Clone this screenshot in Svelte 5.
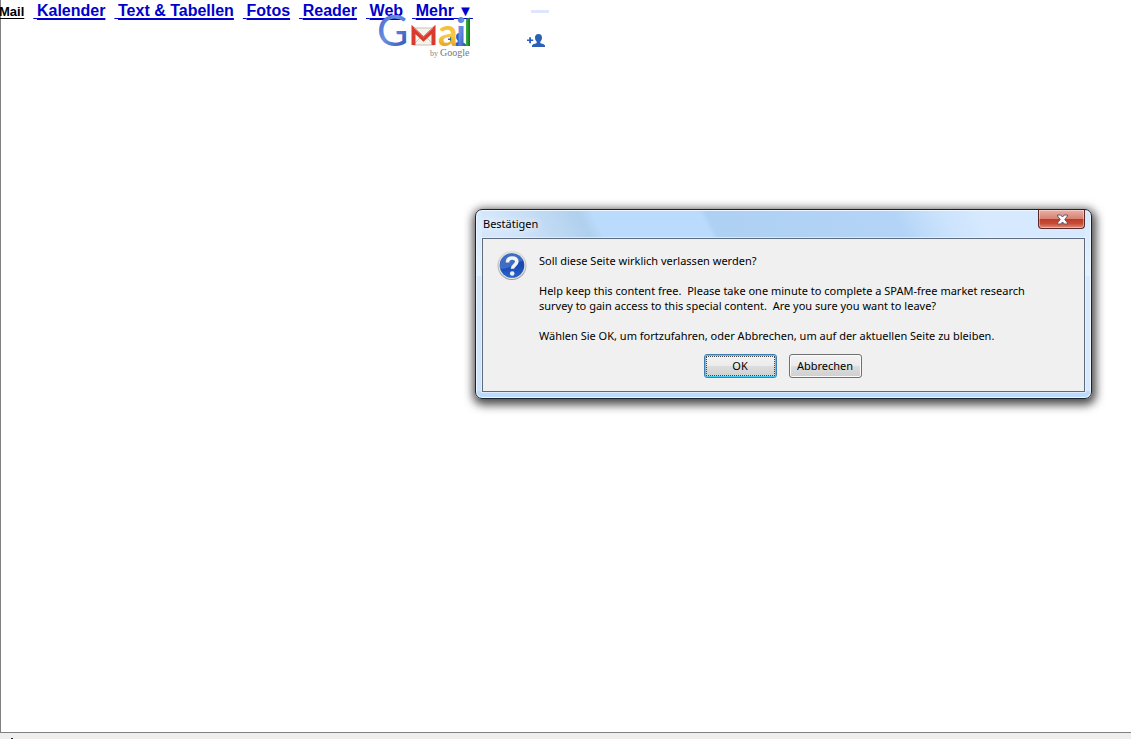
<script>
  const links = ['Kalender', 'Text & Tabellen', 'Fotos', 'Reader', 'Web'];
  let open = $state(true);
  const close = () => (open = false);
</script>

{#snippet person()}
  <path d="M0 5.4h2.200v-2.200h1.800v2.200h2.200v1.600H4v2.200H2.200V7H0z" />
  <path d="M11.500 0c2.400 0 3.500 1.500 3.500 3.600 0 1.800-.6 3.200-1.700 4.100v1.400c.8.8 4.700 1 4.700 2.700V13H5v-1.200c0-1.700 3.900-1.900 4.700-2.700V7.700C8.600 6.800 8 5.400 8 3.600 8 1.500 9.100 0 11.500 0z" />
{/snippet}

<main class="page">
  <nav>
    <a class="current" href="#mail">Mail</a>
    {#each links as label}
      <a href="#{label}"><span class="lead">&nbsp;</span>{label}</a>
    {/each}
    <a href="#mehr"><span class="lead">&nbsp;</span>Mehr<small>&nbsp;▼</small></a>
  </nav>

  <svg class="logo" width="98" height="63" viewBox="0 -13 98 63" role="img" aria-label="Gmail by Google">
    <defs>
      <linearGradient id="blue" x1="0" y1="0" x2="1" y2="1">
        <stop offset="0" stop-color="#2d56bd" /><stop offset=".45" stop-color="#6a90e4" /><stop offset="1" stop-color="#2449a9" />
      </linearGradient>
      <linearGradient id="gold" x1="0" y1="0" x2="0" y2="1">
        <stop offset="0" stop-color="#f1a91c" /><stop offset=".6" stop-color="#f8c846" /><stop offset="1" stop-color="#dc8c0c" />
      </linearGradient>
      <linearGradient id="green" x1="0" y1="0" x2="1" y2="0">
        <stop offset="0" stop-color="#41ad3d" /><stop offset="1" stop-color="#087c1c" />
      </linearGradient>
    </defs>
    <text class="big" x="1" y="33" fill="url(#blue)">G</text>
    <path d="M37 15h21v17H37z" fill="#f6f3ec" stroke="#c9c1b4" />
    <path d="m38 31 8-8m11 8-8-8" stroke="#c9c5bc" fill="none" />
    <path d="M37.500 32V16.500L47.500 26 57.500 16.500V32" fill="none" stroke="#d83b2d" stroke-width="4" />
    <path d="m38 15 9.500 9 9.500-9" fill="none" stroke="#ee7667" />
    <g fill="#2b5fb8" transform="translate(72 20)">{@render person()}</g>
    <text class="letter" x="62" y="33" fill="url(#gold)">a</text>
    <text class="letter" x="80" y="33" fill="url(#blue)">i</text>
    <path d="M90 6l4-1.500V33h-4z" fill="url(#green)" />
    <text class="by" x="54" y="43">by</text>
    <text class="google" x="64" y="43">Google</text>
  </svg>

  <div class="tools">
    <span class="dash"></span>
    <button class="add" aria-label="Person hinzufügen">
      <svg width="18" height="13" viewBox="0 0 18 13" fill="#2b5fb8">{@render person()}</svg>
    </button>
  </div>
</main>
<footer><span class="mark"></span></footer>

{#if open}
  <div class="dialog" role="dialog" aria-labelledby="title">
    <header>
      <h1 id="title">Bestätigen</h1>
      <button class="close" aria-label="Schließen" onclick={close}>
        <svg width="13" height="11" viewBox="0 0 13 11">
          <path d="M1.500 1h3.100l1.900 2 1.900-2h3.100v1L8.800 5.500 11.500 9v1H8.400L6.500 8 4.600 10H1.500V9l2.700-3.500L1.500 2z" fill="#fff" stroke="#565a72" />
        </svg>
      </button>
    </header>
    <section>
      <svg class="question" width="30" height="30" viewBox="0 0 30 30" aria-hidden="true">
        <defs>
          <linearGradient id="ring" x1="0" y1="0" x2="0" y2="1">
            <stop offset="0" stop-color="#dedede" /><stop offset="1" stop-color="#9b9b9b" />
          </linearGradient>
          <linearGradient id="disc" x1="0" y1="0" x2="0" y2="1">
            <stop offset="0" stop-color="#194bae" /><stop offset=".5" stop-color="#1a49b1" /><stop offset="1" stop-color="#2864cf" />
          </linearGradient>
        </defs>
        <circle cx="15" cy="14.500" r="14.500" fill="url(#ring)" />
        <circle cx="15" cy="14.500" r="13.500" fill="#e4e4e2" />
        <circle cx="15" cy="14.500" r="12.300" fill="url(#disc)" />
        <path d="M3 18C2 9 7 3 14 2.500c6-.5 10 3 12 7C20 11 13 18 3 18z" fill="#6d98df" opacity=".45" />
        <path d="M10.500 11.500c0-3 1.800-4.500 4.600-4.500s4.700 1.400 4.700 3.800c0 3.200-4.400 3.400-4.400 7" fill="none" stroke="#f4f4f2" stroke-width="3.600" />
        <circle cx="15.200" cy="22.500" r="2.300" fill="#eee" />
      </svg>
      <div class="message">
        <p>Soll diese Seite wirklich verlassen werden?</p>
        <p>Help keep this content free.&nbsp; Please take one minute to complete a SPAM-free market research survey to gain access to this special content.&nbsp; Are you sure you want to leave?</p>
        <p>Wählen Sie OK, um fortzufahren, oder Abbrechen, um auf der aktuellen Seite zu bleiben.</p>
      </div>
      <div class="actions">
        <button class="default" onclick={close}>OK</button>
        <button onclick={close}>Abbrechen</button>
      </div>
    </section>
  </div>
{/if}

<style>
  :global(body) {
    margin: 0;
    background: #fff;
  }
  :global(#app) {
    display: flex;
    flex-direction: column;
    min-height: 100vh;
    position: relative;
    overflow: hidden;
  }
  .page {
    flex: 1;
    position: relative;
    border-left: 1px solid #808080;
    border-bottom: 1px solid #808080;
  }
  nav {
    display: flex;
    align-items: baseline;
    gap: 9px;
    margin-left: -2px;
    font: bold 16px/22px "Liberation Sans", Arial, sans-serif;
    white-space: nowrap;
  }
  nav a {
    color: #0000cc;
    text-decoration: underline 2px;
    text-underline-offset: 2px;
  }
  nav .current {
    color: #000;
    font-size: 13px;
    text-decoration-thickness: 1px;
  }
  .lead,
  small {
    display: inline-block;
    font-size: 13px;
    line-height: 16px;
    text-decoration: underline 1px;
    text-underline-offset: 2px;
  }
  small {
    font-size: 15px;
  }
  .logo {
    position: absolute;
    left: 375px;
    top: 0;
  }
  .big {
    font: 43px Lato, sans-serif;
  }
  .letter {
    font: bold 39px Lato, sans-serif;
  }
  .by {
    font: 8px "Liberation Serif", serif;
    fill: #888;
  }
  .google {
    font: 10px "Liberation Serif", serif;
    fill: #777;
  }
  .tools {
    position: absolute;
    left: 526px;
    top: 10px;
    display: flex;
    flex-direction: column;
    gap: 21px;
  }
  .dash {
    width: 18px;
    height: 3px;
    margin-left: 4px;
    background: #dfe5fd;
  }
  .add {
    display: flex;
    padding: 0;
    border: 0;
    background: none;
  }
  footer {
    height: 6px;
    background: #f0eeec;
    overflow: hidden;
    display: flex;
    align-items: flex-end;
    padding-left: 11px;
  }
  .mark {
    width: 2px;
    height: 1px;
    background: #223;
  }
  .dialog {
    position: absolute;
    top: 209px;
    right: 39px;
    width: 617px;
    box-sizing: border-box;
    border: 1px solid #1d232b;
    border-radius: 7px;
    padding: 0 6px 6px;
    background:
      linear-gradient(#d6e9fd, #e4f1fe 66px, transparent 66px) left / 6px 100% no-repeat,
      linear-gradient(#d6e9fd, #e4f1fe 66px, transparent 66px) right / 6px 100% no-repeat,
      linear-gradient(#badbfb, #badbfb) bottom / 100% 7px no-repeat,
      linear-gradient(62deg, #cfe4fb 0, #d3e6fb 16%, #c9dff6 20%, #b0d0ee 28%, #badbfb 30%, #badbfb 45%, #aed0f3 46%, #b3d4f6 72%, #c9e2fc 78%, #d6e9fe 84%, #d6e9fe);
    box-shadow: inset 0 0 0 1px #eef7ff, 1px 3px 10px 3px rgb(0 0 0 / 70%);
    color: #000;
  }
  header {
    display: flex;
    align-items: flex-start;
    justify-content: space-between;
    height: 28px;
  }
  h1 {
    margin: 0;
    padding: 6px 1px;
    font: 11px/16px "Noto Sans", "Open Sans", sans-serif;
    text-shadow: 0 0 8px #fff, 0 0 8px #fff;
  }
  .close {
    display: flex;
    align-items: center;
    justify-content: center;
    width: 47px;
    height: 19px;
    padding: 0 0 0 2px;
    border: 1px solid #5b2626;
    border-top: 0;
    border-radius: 0 0 4px 4px;
    background: linear-gradient(#eab0a6, #d98274 48%, #bb3a26 50%, #c74c35 75%, #dc8d79);
    box-shadow: inset 0 0 0 1px rgb(255 255 255 / 40%);
  }
  section {
    display: grid;
    grid-template-columns: 30px 1fr;
    column-gap: 12px;
    padding: 12px 14px 13px;
    border: 1px solid #5d6b7c;
    background: #f0f0f0;
    box-shadow: 0 0 0 1px rgb(235 246 255 / 70%);
  }
  .message {
    display: flex;
    flex-direction: column;
    gap: 15px;
    max-width: 510px;
    padding-top: 2px;
    font: 11px/15px "Noto Sans", "Open Sans", sans-serif;
  }
  p {
    margin: 0;
  }
  .actions {
    grid-column: 1 / -1;
    display: flex;
    justify-content: center;
    gap: 12px;
    padding: 11px 2px 0 0;
  }
  .actions button {
    min-width: 73px;
    height: 24px;
    padding: 0;
    border: 1px solid #707070;
    border-radius: 3px;
    background: linear-gradient(#f3f3f3, #ebebeb 49%, #dddddd 51%, #cfcfcf);
    box-shadow: inset 0 0 0 1px #fafafa;
    color: #000;
    font: 11px/16px "Noto Sans", "Open Sans", sans-serif;
  }
  .actions .default {
    border-color: #3c7fb1;
    box-shadow: inset 0 0 0 1px #45d0f8;
    outline: 1px dotted #444;
    outline-offset: -3px;
  }
</style>
